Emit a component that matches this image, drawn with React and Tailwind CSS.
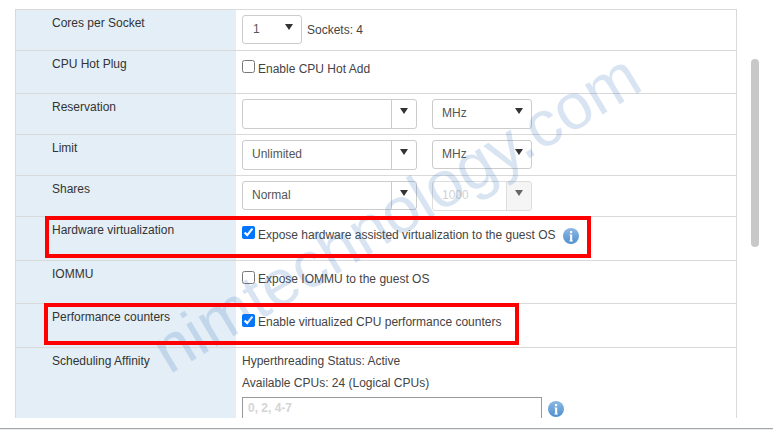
import React from 'react';

const Caret = ({ className = 'border-t-[#333]' }) => (
  <span className={`block w-0 h-0 border-l-[4px] border-r-[4px] border-t-[6px] border-l-transparent border-r-transparent ${className}`} />
);

// plain select box with the caret inside
const Select = ({ value, width, height = 'h-[30px]', pl = 'pl-[9px]' }) => (
  <div className={`${width} ${height} ${pl} pr-[8px] flex items-center justify-between border border-[#ccc] rounded-[3px] text-[#555] bg-white shrink-0`}>
    <span className="pb-[2px]">{value}</span>
    <span className="mb-[6px]"><Caret /></span>
  </div>
);

// text field with a separate caret button
const Combo = ({ value, width = 'w-[175px]', height = 'h-[30px]', disabled = false }) => (
  <div className={`${width} ${height} flex border rounded-[3px] shrink-0 ${disabled ? 'border-[#ddd]' : 'border-[#ccc]'}`}>
    <div className={`flex-1 pl-[9px] pb-[2px] flex items-center ${disabled ? 'text-[#d2d2d2]' : 'text-[#555]'}`}>{value}</div>
    <div className={`w-[25px] flex items-center justify-center pb-[6px] border-l ${disabled ? 'border-[#ddd] bg-[#f5f5f5] rounded-r-[3px]' : 'border-[#ccc]'}`}>
      <Caret className={disabled ? 'border-t-[#666]' : 'border-t-[#333]'} />
    </div>
  </div>
);

const Info = () => (
  <svg width="16" height="16" viewBox="0 0 16 16" className="block shrink-0">
    <defs>
      <linearGradient id="infoGrad" x1="0" y1="0" x2="0" y2="1">
        <stop offset="0" stopColor="#8db9e4" />
        <stop offset="1" stopColor="#4f8fd0" />
      </linearGradient>
    </defs>
    <circle cx="8" cy="8" r="8" fill="url(#infoGrad)" />
    <rect x="7" y="3" width="2.2" height="2.2" fill="#fff" />
    <path d="M6.4 6.4h2.8v6.2h.7v.8H6.4v-.8h.7V7.2h-.7z" fill="#fff" />
  </svg>
);

const Check = ({ label, checked = false, textClass = '', children }) => (
  <div className="flex items-start leading-[16px]">
    <input type="checkbox" defaultChecked={checked} className="w-[13px] h-[13px] mr-[3px]" />
    <span className={textClass}>{label}</span>
    {children}
  </div>
);

const Row = ({ label, height, pad, children }) => (
  <div className={`${height} flex border-b border-[#d9d9d9] box-border`}>
    <div className="w-[220px] shrink-0 bg-[#e3eef6] pl-[36px] pt-[5px] leading-[16px] text-[#333]">{label}</div>
    <div className={`flex-1 pl-[6px] ${pad}`}>{children}</div>
  </div>
);

export default function App() {
  return (
    <div className="relative w-[773px] h-[430px] overflow-hidden bg-white text-[12px] text-[#444] font-['Liberation_Sans',Arial,sans-serif]">
      <div className="ml-[15px] pt-[9px] h-[418px]">
        <div className="w-[722px] h-[409px] overflow-hidden border-x border-t border-[#d9d9d9]">
          <Row label="Cores per Socket" height="h-[41px]" pad="pt-[5px]">
            <div className="flex items-center gap-[5px]">
              <Select value="1" width="w-[60px]" height="h-[29px]" pl="pl-[10px]" />
              <span>Sockets: 4</span>
            </div>
          </Row>
          <Row label="CPU Hot Plug" height="h-[43px]" pad="pt-[9px]">
            <Check label="Enable CPU Hot Add" textClass="mt-[1px]" />
          </Row>
          <Row label="Reservation" height="h-[41px]" pad="pt-[5px]">
            <div className="flex gap-[15px]">
              <Combo value="" />
              <Select value="MHz" width="w-[100px]" />
            </div>
          </Row>
          <Row label="Limit" height="h-[41px]" pad="pt-[5px]">
            <div className="flex gap-[15px]">
              <Combo value="Unlimited" />
              <Select value="MHz" width="w-[100px]" height="h-[29px]" />
            </div>
          </Row>
          <Row label="Shares" height="h-[41px]" pad="pt-[5px]">
            <div className="flex gap-[15px]">
              <Combo value="Normal" height="h-[29px]" />
              <Combo value="1000" width="w-[100px]" disabled />
            </div>
          </Row>
          <Row label="Hardware virtualization" height="h-[44px]" pad="pt-[9px]">
            <Check label="Expose hardware assisted virtualization to the guest OS" textClass="mt-[1px]" checked>
              <span className="ml-[7px] mt-[2px]"><Info /></span>
            </Check>
          </Row>
          <Row label="IOMMU" height="h-[43px]" pad="pt-[10px]">
            <Check label="Expose IOMMU to the guest OS" />
          </Row>
          <Row label="Performance counters" height="h-[44px]" pad="pt-[10px]">
            <Check label="Enable virtualized CPU performance counters" checked />
          </Row>
          <div className="flex h-[80px]">
            <div className="w-[220px] shrink-0 bg-[#e3eef6] pl-[36px] pt-[5px] leading-[16px] text-[#333]">Scheduling Affinity</div>
            <div className="flex-1 pl-[6px] pt-[5px] leading-[16px]">
              <div>Hyperthreading Status: Active</div>
              <div className="mt-[6px]">Available CPUs: 24 (Logical CPUs)</div>
              <div className="flex items-start gap-[6px] mt-[6px]">
                <div className="w-[300px] h-[30px] border border-[#999] pl-[5px] pt-[2px] text-[#d5d5d5] font-bold">0, 2, 4-7</div>
                <span className="mt-[4px]"><Info /></span>
              </div>
            </div>
          </div>
        </div>
      </div>

      {/* window edge at the bottom */}
      <div className="mt-[10px] h-[1px] bg-[#a6a6a6]" />
      <div className="h-[1px] bg-[#e6ecf2]" />

      {/* scrollbar */}
      <div className="absolute left-[751px] top-[59px] w-[8px] h-[188px] rounded-[4px] bg-[#c8c8c8]" />

      {/* watermark */}
      <div className="absolute left-[118px] top-[180px] origin-center -rotate-[31deg] text-[65px] leading-none whitespace-nowrap text-[#3c78be]/20 pointer-events-none">
        nimtechnology.com
      </div>

      {/* annotation boxes */}
      <div className="absolute left-[45px] top-[216px] w-[546px] h-[42px] border-[4px] border-[#ff0000]" />
      <div className="absolute left-[44px] top-[303px] w-[475px] h-[42px] border-[4px] border-[#ff0000]" />
    </div>
  );
}
